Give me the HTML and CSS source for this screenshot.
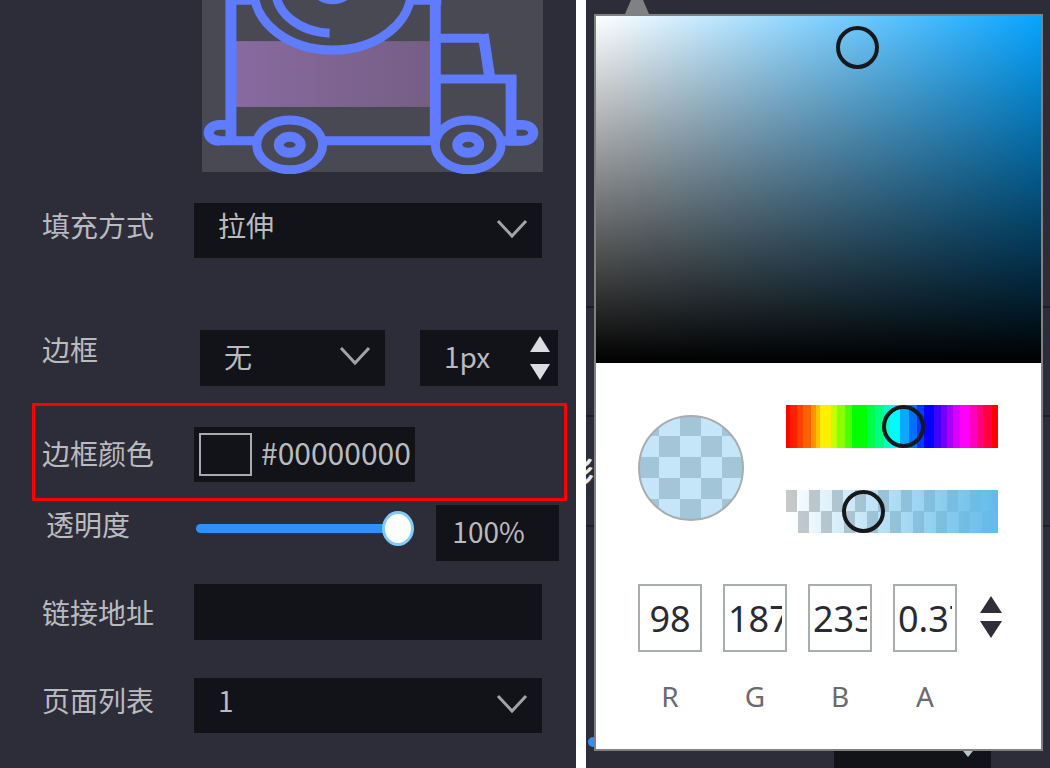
FILE: index.html
```html
<!DOCTYPE html>
<html lang="zh-CN">
<head>
<meta charset="utf-8">
<title>边框颜色</title>
<link rel="stylesheet" href="styles.css">
</head>
<body>
<main class="layout">
  <form class="panel">
    <figure class="preview">
      <svg class="preview-art" viewBox="0 0 342 174" role="img" aria-label="卡车">
        <defs>
          <linearGradient id="band" x1="0" x2="1" y1="0" y2="0">
            <stop offset="0" stop-color="#886aa0"/>
            <stop offset="1" stop-color="#755e84"/>
          </linearGradient>
        </defs>
        <rect x="32" y="41" width="200" height="66" fill="url(#band)"/>
        <g fill="none" stroke="#5f7bff" stroke-width="9">
          <path d="M29 0V141M234 0V141M310 75V145" stroke-width="11"/>
          <path d="M24 0H54M208 0H240"/>
          <ellipse cx="131" cy="-10" rx="79" ry="60" fill="#494953"/>
          <path d="M74 -10A57 43 0 0 0 128 33"/>
          <ellipse cx="131" cy="-10" rx="20" ry="14" fill="#5f7bff" stroke="none"/>
          <path d="M236 38H281M236 79H315"/>
          <path d="M282 34L289 80" stroke-width="11"/>
          <path d="M18 141H320"/>
          <path d="M29 125H18C3 125 3 141 18 141M310 125H321C336 125 336 141 321 141H306" stroke-width="10"/>
          <g fill="#494953">
            <ellipse cx="88" cy="145" rx="33" ry="25"/>
            <ellipse cx="267" cy="145" rx="33" ry="25"/>
          </g>
          <g fill="#494953" stroke-width="10">
            <ellipse cx="88" cy="145" rx="11" ry="8"/>
            <ellipse cx="267" cy="145" rx="11" ry="8"/>
          </g>
        </g>
      </svg>
    </figure>

    <div class="row row-fill">
      <label class="label" for="fill">填充方式</label>
      <div class="field field-select">
        <select class="control raised" id="fill"><option>拉伸</option></select>
        <svg class="chevron" viewBox="0 0 32 20" aria-hidden="true"><path d="M2 2L16 17L30 2"/></svg>
      </div>
    </div>

    <div class="row row-border">
      <label class="label label-high" for="border">边框</label>
      <div class="pair">
        <div class="field field-select field-style">
          <select class="control lifted" id="border"><option>无</option></select>
          <svg class="chevron" viewBox="0 0 32 20" aria-hidden="true"><path d="M2 2L16 17L30 2"/></svg>
        </div>
        <div class="field field-stepper">
          <input class="control lifted" type="text" value="1px" aria-label="边框宽度">
          <span class="stepper">
            <button class="step step-up" type="button" aria-label="增加"></button>
            <button class="step step-down" type="button" aria-label="减少"></button>
          </span>
        </div>
      </div>
    </div>

    <div class="highlight">
      <div class="row row-color">
        <label class="label label-middle" for="color">边框颜色</label>
        <div class="field field-color">
          <button class="swatch" type="button" aria-label="选择颜色"></button>
          <input class="control hex" id="color" type="text" value="#00000000">
        </div>
      </div>
    </div>

    <div class="row row-opacity">
      <label class="label label-inset" for="opacity">透明度</label>
      <div class="opacity">
        <input class="slider" id="opacity" type="range" min="0" max="100" value="100">
        <div class="field field-percent">
          <input class="control lifted" type="text" value="100%" aria-label="透明度数值">
        </div>
      </div>
    </div>

    <div class="row row-link">
      <label class="label label-link" for="link">链接地址</label>
      <div class="field"><input class="control" id="link" type="text"></div>
    </div>

    <div class="row row-pages">
      <label class="label" for="pages">页面列表</label>
      <div class="field field-select">
        <select class="control raised" id="pages"><option>1</option></select>
        <svg class="chevron" viewBox="0 0 32 20" aria-hidden="true"><path d="M2 2L16 17L30 2"/></svg>
      </div>
    </div>
  </form>

  <section class="stage">
    <div class="backdrop" aria-hidden="true">
      <span class="rule rule-a"></span>
      <span class="rule rule-b"></span>
      <span class="rule rule-c"></span>
      <span class="behind-text">影</span>
      <span class="behind-dot"></span>
      <span class="behind-field"></span>
      <span class="behind-arrow"></span>
      <span class="pointer"></span>
    </div>
    <div class="picker">
      <div class="shade"><span class="ring"></span></div>
      <div class="mix">
        <div class="sample"></div>
        <div class="bars">
          <input class="bar bar-hue" type="range" min="0" max="100" value="57" aria-label="色相">
          <input class="bar bar-alpha" type="range" min="0" max="100" value="33" aria-label="不透明度">
        </div>
      </div>
      <div class="channels">
        <label class="channel"><input class="number" type="text" value="98"><span>R</span></label>
        <label class="channel"><input class="number" type="text" value="187"><span>G</span></label>
        <label class="channel"><input class="number" type="text" value="233"><span>B</span></label>
        <label class="channel"><input class="number" type="text" value="0.37"><span>A</span></label>
        <button class="mode" type="button" aria-label="切换颜色模式">
          <svg viewBox="0 0 22 42" aria-hidden="true"><path d="M11 0L22 17H0ZM0 25H22L11 42Z"/></svg>
        </button>
      </div>
    </div>
  </section>
</main>
</body>
</html>
```
FILE: styles.css
```css
* {
  box-sizing: border-box;
}

body {
  margin: 0;
  background: #fff;
  font-family: "Noto Sans CJK SC", "Noto Sans", sans-serif;
  font-size: 28px;
  color: #b9bbbf;
}

input,
select,
button {
  margin: 0;
  padding: 0;
  border: 0;
  border-radius: 0;
  background: none;
  color: inherit;
  font: inherit;
}

.layout {
  display: grid;
  grid-template-columns: 576fr 464fr;
  column-gap: 10px;
  min-height: 100vh;
}

/* Property panel */
.panel {
  display: flex;
  flex-direction: column;
  padding: 0 34px 35px 42px;
  background: #2d2d3a;
}

.preview {
  height: 172px;
  margin: 0 -1px 31px 160px;
  background: #494953;
}

.preview-art {
  display: block;
  width: 100%;
  height: 174px;
}

.row {
  display: grid;
  grid-template-columns: 152px 1fr;
  height: 55px;
}

.row-fill {
  margin-bottom: 72px;
}

.row-border {
  height: 56px;
  margin: 0 -16px 17px 0;
}

.row-opacity {
  height: 56px;
  margin: 0 -17px 23px 0;
}

.row-link {
  margin-bottom: 39px;
}

.highlight {
  margin: 0 -25px 4px -10px;
  padding: 21px 149px 16px 7px;
  border: 3px solid #f00;
}

.label {
  line-height: 44px;
  white-space: nowrap;
}

.label-high {
  line-height: 38px;
}

.label-middle {
  line-height: 52px;
}

.label-link {
  line-height: 56px;
}

.label-inset {
  padding-left: 4px;
  line-height: 38px;
}

.field {
  position: relative;
  display: flex;
  min-width: 0;
  background: #121318;
}

.control {
  flex: 1;
  width: 100%;
  min-width: 0;
  padding: 0 24px;
  appearance: none;
}

.raised {
  padding-bottom: 12px;
}

.lifted {
  padding-bottom: 4px;
}

.chevron {
  position: absolute;
  top: 50%;
  right: 14px;
  width: 32px;
  height: 20px;
  margin-top: -12px;
  fill: none;
  stroke: #a3a3a7;
  stroke-width: 3;
  pointer-events: none;
}

.pair {
  display: grid;
  grid-template-columns: 185fr 138fr;
  column-gap: 35px;
  padding-left: 6px;
}

.stepper {
  display: flex;
  flex-direction: column;
  justify-content: center;
  gap: 12px;
  padding-right: 8px;
}

.field-stepper .control {
  padding-right: 0;
}

.step {
  width: 20px;
  height: 16px;
  background: #dcdde0;
}

.step-up {
  clip-path: polygon(50% 0, 100% 100%, 0 100%);
}

.step-down {
  clip-path: polygon(0 0, 100% 0, 50% 100%);
}

.field-color {
  align-items: center;
  gap: 9px;
  padding-left: 5px;
}

.swatch {
  flex: none;
  width: 53px;
  height: 43px;
  border: 2px solid #a9aaae;
}

.hex {
  padding: 0 0 6px;
  font-size: 30px;
}

.opacity {
  display: grid;
  grid-template-columns: 219fr 123fr;
  column-gap: 22px;
  padding-left: 2px;
}

.field-percent .control {
  padding-left: 16px;
}

.slider {
  width: 100%;
  height: 46px;
  appearance: none;
}

.slider::-webkit-slider-runnable-track {
  height: 9px;
  border-radius: 5px;
  background: #308ff8;
}

.slider::-webkit-slider-thumb {
  width: 32px;
  height: 35px;
  margin-top: -13px;
  border: 3px solid #83cbf7;
  border-radius: 50%;
  background: #fff;
  appearance: none;
}

/* Colour picker */
.stage {
  position: relative;
  padding: 14px 7px 17px 8px;
  background: #2d2d3a;
  overflow: hidden;
}

.backdrop > span {
  position: absolute;
}

.rule {
  left: 0;
  right: 0;
  height: 2px;
  background: #1d1d26;
}

.rule-a {
  top: 306px;
}

.rule-b {
  top: 415px;
}

.rule-c {
  top: 525px;
}

.behind-text {
  top: 456px;
  left: -20px;
  color: #e4eef4;
  font-weight: 700;
  line-height: 30px;
}

.behind-dot {
  top: 737px;
  left: 2px;
  width: 10px;
  height: 10px;
  border-radius: 50%;
  background: #308ff8;
}

.behind-field {
  right: 59px;
  bottom: 0;
  width: 157px;
  height: 30px;
  background: #121318;
}

.behind-arrow {
  top: 751px;
  right: 77px;
  width: 10px;
  height: 6px;
  background: #b9c4c9;
  clip-path: polygon(0 0, 100% 0, 50% 100%);
}

.pointer {
  top: -14px;
  left: 39px;
  width: 24px;
  height: 28px;
  background: #7f8182;
  clip-path: polygon(50% 0, 100% 100%, 0 100%);
}

.picker {
  position: relative;
  height: 737px;
  border: 2px solid #7f8182;
  background: #fff;
}

.shade {
  position: relative;
  height: 347px;
  background:
    linear-gradient(to bottom, transparent, #000),
    linear-gradient(to right, #fff, #07a4ff);
}

.ring {
  position: absolute;
  top: 9%;
  left: 58.6%;
  width: 43px;
  height: 43px;
  margin: -21px;
  border: 4px solid #17181c;
  border-radius: 50%;
}

.mix {
  display: grid;
  grid-template-columns: 106px 1fr;
  column-gap: 42px;
  padding: 42px 43px 0 42px;
}

.sample {
  height: 106px;
  margin-top: 10px;
  border: 2px solid #a9adaf;
  border-radius: 50%;
  background: conic-gradient(#c5e6f8 25%, #a3c5d8 0 50%, #c5e6f8 0 75%, #a3c5d8 0) 19px 19px / 42px 42px;
}

.bars {
  display: grid;
  align-content: start;
  row-gap: 42px;
}

.bar {
  display: block;
  width: 100%;
  height: 43px;
  appearance: none;
}

.bar::-webkit-slider-thumb {
  width: 43px;
  height: 43px;
  border: 4px solid #17181c;
  border-radius: 50%;
  background: transparent;
  appearance: none;
}

.bar-hue {
  background: linear-gradient(to right,
    #f00 2%, #ff2000 0 5%, #ff4000 0 8%, #ff6000 0 12%, #ff9000 0 14%, #ffc000 0 16%,
    #fff000 0 21%, #c4ff00 0 24%, #8cff00 0 28%, #4dff00 0 31%, #0f0 0 38%,
    #00ff48 0 42%, #00ff80 0 46%, #00ffc0 0 49%, #00faff 0 54%, #0ba8ff 0 58%,
    #0070ff 0 62%, #0038ff 0 65%, #0800ff 0 70%, #4000ff 0 73%, #7000ff 0 76%,
    #a800ff 0 79%, #d800ff 0 82%, #f0f 0 87%, #ff00b8 0 90%, #ff0080 0 93%,
    #ff0040 0 97%, #f00 0);
}

.bar-alpha {
  background:
    linear-gradient(to right, #62bbe900, #62bbe9),
    conic-gradient(#fff 25%, #c8c8c8 0 50%, #fff 0 75%, #c8c8c8 0) 0 0 / 23px 43px;
}

.channels {
  display: flex;
  align-items: flex-start;
  gap: 21px;
  padding: 51px 39px 0 42px;
}

.channel {
  display: flex;
  flex-direction: column;
  align-items: center;
  gap: 23px;
  color: #6a6b6e;
  font-family: "Noto Sans", sans-serif;
  line-height: 42px;
}

.number {
  width: 64px;
  height: 68px;
  padding: 0 3px;
  border: 2px solid #a9adac;
  color: #2a2b32;
  font-size: 36px;
  text-align: center;
}

.mode {
  width: 22px;
  height: 42px;
  margin: 12px 0 0 auto;
  fill: #2d2e38;
}

.mode svg {
  display: block;
}
```
